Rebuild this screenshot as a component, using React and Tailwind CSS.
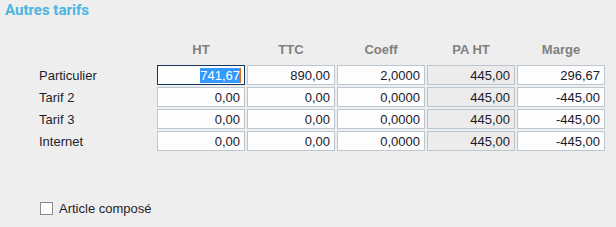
import React from "react";

const rows = [
  { label: "Particulier", vals: ["741,67", "890,00", "2,0000", "445,00", "296,67"] },
  { label: "Tarif 2", vals: ["0,00", "0,00", "0,0000", "445,00", "-445,00"] },
  { label: "Tarif 3", vals: ["0,00", "0,00", "0,0000", "445,00", "-445,00"] },
  { label: "Internet", vals: ["0,00", "0,00", "0,0000", "445,00", "-445,00"] },
];

const headers = ["HT", "TTC", "Coeff", "PA HT", "Marge"];

function Field({ value, disabled, focused }) {
  if (focused) {
    return (
      <div className="h-[20px] border border-[#16385c] bg-[#fdfdfd] flex items-center justify-end pr-[3px]">
        <span className="bg-[#3399ff] text-white leading-[15px]">{value}</span>
        <span className="w-[1px] h-[15px] bg-[#e07020]"></span>
      </div>
    );
  }
  return (
    <div
      className={
        "h-[20px] border border-[#bcc6d0] flex items-center justify-end pr-[4px] text-[#1a1a2a] " +
        (disabled ? "bg-[#ececec]" : "bg-[#fdfdfd]")
      }
    >
      {value}
    </div>
  );
}

export default function App() {
  return (
    <div
      className="w-[616px] h-[227px] bg-[#eeeeee] relative overflow-hidden"
      style={{ fontFamily: '"Liberation Sans", Arial, sans-serif' }}
    >
      <div
        className="pl-[5px] pt-[0px] text-[15px] font-bold text-[#4cb5e0] leading-[20px]"
        style={{ fontFamily: "Roboto, sans-serif" }}
      >
        Autres tarifs
      </div>
      <div className="mt-[21px] ml-[39px] grid grid-cols-[116px_88px_88px_88px_88px_88px] gap-x-[2px] gap-y-[2px] text-[13px] leading-[15px]">
        <div className="h-[22px]"></div>
        {headers.map((h) => (
          <div key={h} className="h-[22px] text-center font-bold text-[#808080] leading-[18px]">
            {h}
          </div>
        ))}
        {rows.map((r, ri) => (
          <React.Fragment key={r.label}>
            <div className="h-[20px] flex items-center text-[#1e1e2a]">{r.label}</div>
            {r.vals.map((v, ci) => (
              <Field key={ci} value={v} disabled={ci === 3} focused={ri === 0 && ci === 0} />
            ))}
          </React.Fragment>
        ))}
      </div>
      <div className="mt-[50px] ml-[40px] flex items-center gap-[6px] text-[13px] leading-[15px] text-[#1e1e2a]">
        <div className="w-[13px] h-[13px] border border-[#8a8a8a] bg-[#fdfdfd]"></div>
        <span>Article composé</span>
      </div>
    </div>
  );
}
